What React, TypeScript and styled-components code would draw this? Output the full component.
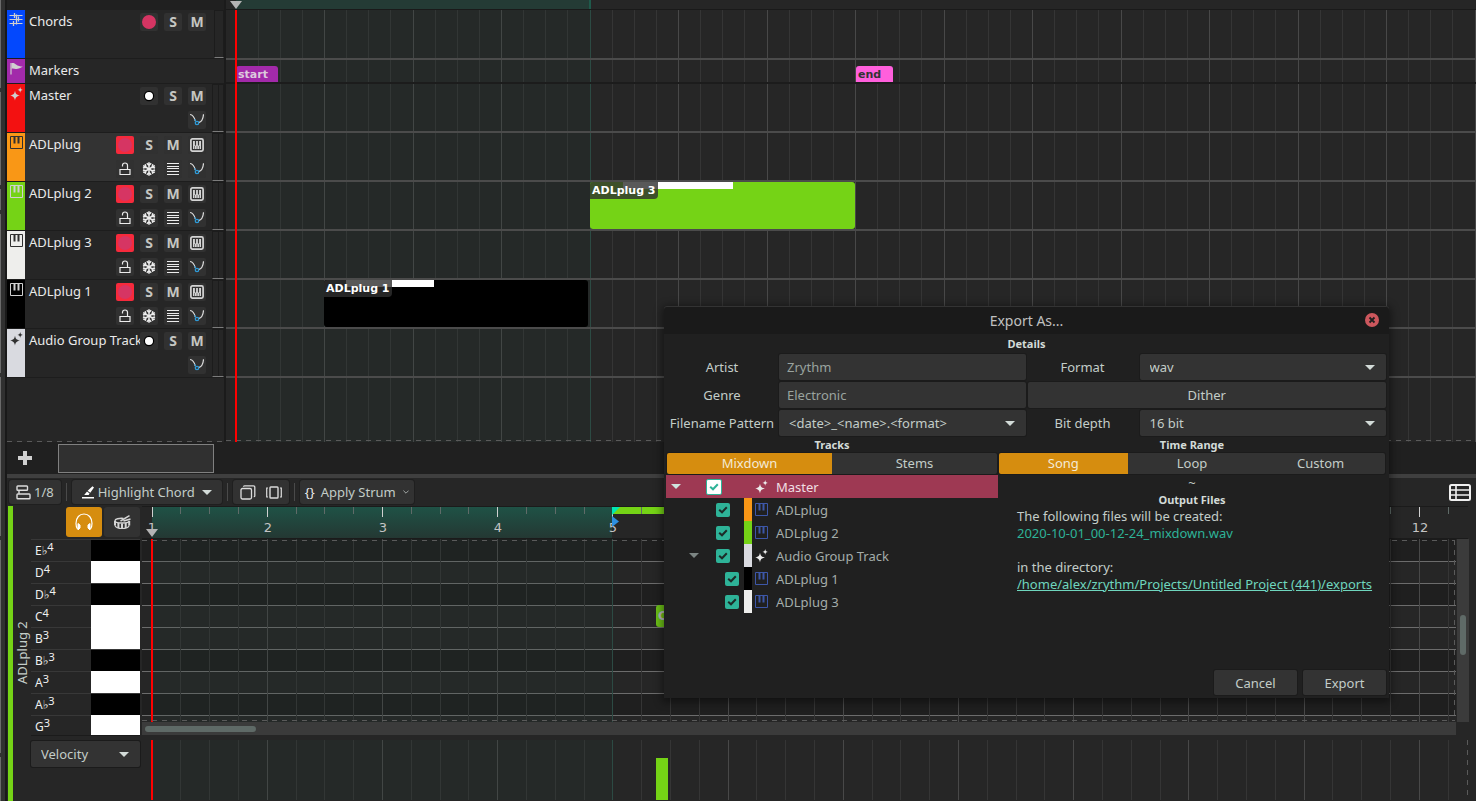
import React, { useEffect, useState } from 'react';
import styled, { createGlobalStyle, css } from 'styled-components';

const GlobalStyle = createGlobalStyle`
  * { box-sizing: border-box; }
  body {
    margin: 0;
    background: #262626;
    color: #e6e6e6;
    font-family: "Noto Sans", "DejaVu Sans", sans-serif;
    font-size: 13px;
    overflow: hidden;
  }
  button, select, input { font: inherit; color: inherit; margin: 0; }
  button { padding: 0; border: 0; cursor: pointer; }
`;

/* ---------- icons ---------- */

const PianoIcon = ({ color, size = 13 }: { color: string; size?: number }) => (
  <svg width={size} height={size} viewBox="0 0 13 13" fill="none" stroke={color} aria-hidden>
    <path d="M.5.5h12v12H.5z" />
    <path d="M4.500 1v6.500M8.500 1v6.500" strokeWidth="2" />
  </svg>
);

const SparkIcon = ({ color }: { color: string }) => (
  <svg width="13" height="14" viewBox="0 0 13 14" fill={color} aria-hidden>
    <path d="M5 3.800c.7 3.100 1.300 3.900 4.900 4.800C6.300 9.500 5.700 10.400 5 13.500 4.300 10.400 3.700 9.500.1 8.600 3.700 7.700 4.300 6.900 5 3.800z" />
    <path d="M10.200 0c.4 1.900.8 2.400 2.700 2.900-1.900.4-2.300.9-2.700 2.800-.4-1.900-.8-2.400-2.700-2.800 1.900-.5 2.300-1 2.700-2.900z" />
  </svg>
);

const FlagIcon = ({ color }: { color: string }) => (
  <svg width="13" height="13" viewBox="0 0 13 13" aria-hidden>
    <path d="M1 1v11.500" stroke={color} strokeWidth="1.200" />
    <path d="M1.500 1.200c2-.6 3.300.2 4.500 1.300 2 1.600 4 1.900 6.800 2.100-2.400 1.500-4.600 2.700-7 2.500-1.600-.1-2.800-.8-4.300-.3z" fill={color} />
  </svg>
);

const ChordsIcon = ({ color }: { color: string }) => (
  <svg width="14" height="13" viewBox="0 0 14 13" stroke={color} fill="none" aria-hidden>
    <path d="M.5 2.500h13M.5 6.500h13M.5 10.500h13" />
    <path d="M5.500 0v5M7.500 1.500v10M9.500 3.500v5M4.500 8v5" strokeWidth="1.300" />
  </svg>
);

const PluginIcon = () => (
  <svg width="14" height="14" viewBox="0 0 14 14" fill="none" aria-hidden>
    <rect x=".9" y=".9" width="12.200" height="12.200" rx="1.500" stroke="#d4d4d4" strokeWidth="1.700" />
    <path d="M3 3h8v8H3z" fill="#d4d4d4" />
    <path d="M5.500 3v4.500M8.500 3v4.500" stroke="#333" strokeWidth="1.200" />
    <path d="M4.500 8v3M7 8v3M9.500 8v3" stroke="#555" strokeWidth=".7" />
  </svg>
);

const LockIcon = () => (
  <svg width="12" height="14" viewBox="0 0 12 14" fill="none" stroke="#ececec" aria-hidden>
    <path d="M1 7.500h10v5H1z" strokeWidth="1.200" />
    <path d="M3.500 4.500V3.300c0-1.400 1.100-2.300 2.500-2.300s2.500.9 2.500 2.300v4" strokeWidth="1.200" />
  </svg>
);

const FreezeIcon = () => (
  <svg width="14" height="14" viewBox="0 0 14 14" fill="none" stroke="#ececec" strokeWidth="1.500" aria-hidden>
    {[0, 60, 120, 180, 240, 300].map((a) => (
      <path key={a} d="M7 7V.2M4.800 1.300l2.200 2.200 2.200-2.200" transform={`rotate(${a} 7 7)`} />
    ))}
  </svg>
);

const LinesIcon = () => (
  <svg width="12" height="12" viewBox="0 0 12 12" stroke="#ececec" aria-hidden>
    <path d="M0 .5h12M0 3.500h12M0 5.500h12M0 8.500h12M0 11.500h12" />
  </svg>
);

const CurveIcon = () => (
  <svg width="14" height="14" viewBox="0 0 14 14" fill="none" aria-hidden>
    <path d="M0 1.500c3 .3 4.200 2.300 5.300 6.500M13.500 1.300c-.3 5-2.200 7.600-5 8.300" stroke="#dcdcdc" strokeWidth="1.200" />
    <circle cx="7" cy="10" r="1.700" stroke="#2f9bd8" strokeWidth="1.300" />
    <path d="M4.500 6l1.500 2.500" stroke="#2f9bd8" />
  </svg>
);

const RecordIcon = () => (
  <svg width="14" height="14" viewBox="0 0 14 14" aria-hidden>
    <circle cx="7" cy="7" r="7" fill="#d63563" />
  </svg>
);

const MonitorIcon = () => (
  <svg width="14" height="14" viewBox="0 0 14 14" aria-hidden>
    <circle cx="7" cy="7" r="4.600" fill="#fff" stroke="#000" strokeWidth="1.200" />
  </svg>
);

const CaretIcon = ({ color = '#d3dbd8' }: { color?: string }) => (
  <svg width="10" height="5" viewBox="0 0 10 5" aria-hidden>
    <path d="M0 0h10L5 5z" fill={color} />
  </svg>
);

const ChevronIcon = () => (
  <svg width="6" height="4" viewBox="0 0 6 4" fill="none" stroke="#a0a6a4" aria-hidden>
    <path d="M.4.6 3 3.200 5.600.6" />
  </svg>
);

const SnapIcon = () => (
  <svg width="15" height="15" viewBox="0 0 15 15" fill="none" stroke="#dcdcdc" strokeWidth="1.400" aria-hidden>
    <rect x="1" y="1" width="10.500" height="4.200" rx=".8" />
    <rect x="1" y="9" width="13" height="4.800" rx=".8" />
    <path d="M3 5.500v3.300" />
  </svg>
);

const HighlightIcon = () => (
  <svg width="13" height="13" viewBox="0 0 13 13" fill="#fff" aria-hidden>
    <path d="M0 11h12v1.500H0z" />
    <path d="M10.500.2 12 1.500 8.300 6.800 5.600 4.800zM5 5.500l2.600 2-1 1.500H2.200l1-1.300z" />
  </svg>
);

const CopyIcon = () => (
  <svg width="16" height="15" viewBox="0 0 16 15" fill="none" stroke="#dcdcdc" strokeWidth="1.300" aria-hidden>
    <rect x="1" y="3.500" width="10.500" height="10.500" rx="1.500" />
    <path d="M3.500 1.800c0-.6.400-.9 1-.9h9c.8 0 1.300.5 1.300 1.300v8.500c0 .7-.4 1-1 1" />
  </svg>
);

const FlipIcon = () => (
  <svg width="16" height="13" viewBox="0 0 16 13" fill="none" stroke="#dcdcdc" strokeWidth="1.400" aria-hidden>
    <rect x="4" y="1" width="8" height="11" rx=".8" />
    <path d="M2 2H.7v9H2M14 2h1.300v9H14" strokeWidth="1.200" />
  </svg>
);

const TableIcon = () => (
  <svg width="22" height="17" viewBox="0 0 22 17" fill="none" stroke="#f0f0f0" aria-hidden>
    <rect x="1" y="1" width="20" height="15" rx="1.500" strokeWidth="2" />
    <path d="M1 6h20M1 11h20M7 1v15" strokeWidth="1.600" />
  </svg>
);

const HeadphonesIcon = () => (
  <svg width="18" height="18" viewBox="0 0 18 18" fill="none" stroke="#fff" aria-hidden>
    <path d="M2.500 16c-1-1.500-1.500-3.500-1.500-5.500C1 4.500 4.500 1 9 1s8 3.500 8 9.500c0 2-.5 4-1.500 5.500" strokeWidth="1.200" />
    <path d="M3 10.500l2 1.500v3L3 17zM15 10.500L13 12v3l2 2z" fill="#fff" strokeWidth="1" />
  </svg>
);

const DrumIcon = () => (
  <svg width="17" height="15" viewBox="0 0 17 15" fill="none" stroke="#d4d4d4" aria-hidden>
    <path d="M9.500 3.400C5 3 1 4 1 5.700 1 7.200 4 8 8 8s7.200-.8 7.200-2.300" strokeWidth="1.400" />
    <path d="M1 6v4.500M4.400 8v5M8 8.500v5.200M11.700 8v5M15.200 6v4.500" strokeWidth="2" />
    <path d="M1 10.500c.8 2 3.500 3 7 3s6.500-1 7.200-3" strokeWidth="1.200" />
    <path d="M6.500 6 15.500.7M9.500 6l7-2" strokeWidth="1.500" />
  </svg>
);

const PlusIcon = () => (
  <svg width="14" height="14" viewBox="0 0 14 14" fill="#d0d0d0" aria-hidden>
    <path d="M5 0h4v5h5v4H9v5H5V9H0V5h5z" />
  </svg>
);

const PlayheadIcon = () => (
  <svg width="12" height="8" viewBox="0 0 12 8" aria-hidden>
    <path d="M0 0h12L6 8z" fill="#b4b4b4" />
  </svg>
);

/* ---------- page frame ---------- */

const dashes = (direction: string) =>
  `repeating-linear-gradient(${direction}, #5a5a5a 0 5px, transparent 5px 10px)`;

const Page = styled.div`
  display: flex;
  min-height: 100vh;
`;

const Rail = styled.div`
  width: 7px;
  flex: none;
  background: #303030;
  border-right: 2px solid #191919;
  display: flex;
  flex-direction: column;
  gap: 4px;
`;

const RailSegment = styled.div<{ $grow: number }>`
  flex: ${(p) => p.$grow};
  width: 1px;
  background: #6a6a6a;
`;

const Main = styled.main`
  flex: 1;
  min-width: 0;
  display: flex;
  flex-direction: column;
`;

const Timeline = styled.section`
  display: flex;
`;

/* ---------- track list ---------- */

const TrackList = styled.div`
  width: 219px;
  flex: none;
  display: flex;
  flex-direction: column;
  border-right: 2px solid #1b1b1b;
  background: ${dashes('to right')} bottom / 100% 1px no-repeat;
`;

const TrackListHead = styled.div`
  height: 10px;
  background: #202020;
`;

const Track = styled.div<{ $selected?: boolean; $short?: boolean }>`
  display: flex;
  height: ${(p) => (p.$short ? 25 : 49)}px;
  border-bottom: 1px solid #1d1d1d;
  background: ${(p) => (p.$selected ? 'linear-gradient(to right, #333 205px, #262626 205px)' : '#262626')};
`;

const TrackColor = styled.div<{ $color: string }>`
  width: 18px;
  flex: none;
  display: flex;
  justify-content: center;
  align-items: flex-start;
  padding-top: 3px;
  background: ${(p) => p.$color};
`;

const TrackName = styled.div`
  flex: 1;
  min-width: 0;
  padding: 2px 0 0 4px;
  line-height: 18px;
  white-space: nowrap;
  color: #eaeaea;
`;

const TrackButtons = styled.div`
  display: flex;
  flex-direction: column;
  gap: 6px;
  padding-top: 3px;
`;

const ButtonRow = styled.div`
  display: flex;
  justify-content: flex-end;
  gap: 6px;
`;

const TrackButton = styled.button<{ $armed?: boolean }>`
  width: 18px;
  height: 18px;
  display: flex;
  align-items: center;
  justify-content: center;
  border-radius: 2px;
  background: ${(p) => (p.$armed ? '#f62a3c' : '#313131')};
  color: #c6c6c2;
  font-weight: 700;
  font-size: 14px;
  line-height: 18px;
`;

const Meter = styled.div<{ $narrow?: boolean }>`
  width: ${(p) => (p.$narrow ? 10 : 12)}px;
  margin-left: ${(p) => (p.$narrow ? 8 : 6)}px;
  border: 1px solid #1c1c1c;
  border-bottom-color: #7c7c7c;
  display: flex;
  justify-content: center;
  &::before {
    content: '';
    width: 1px;
    background: ${(p) => (p.$narrow ? 'transparent' : '#1c1c1c')};
  }
`;

type TrackKind = 'chord' | 'marker' | 'bus' | 'instrument';
interface TrackInfo { name: string; color: string; kind: TrackKind; ink: string; selected?: boolean }

const tracks: TrackInfo[] = [
  { name: 'Chords', color: '#0348fd', kind: 'chord', ink: '#d0d0d0' },
  { name: 'Markers', color: '#a22aaa', kind: 'marker', ink: '#d0d0d0' },
  { name: 'Master', color: '#f31111', kind: 'bus', ink: '#d0d0d0' },
  { name: 'ADLplug', color: '#f99716', kind: 'instrument', ink: '#303030', selected: true },
  { name: 'ADLplug 2', color: '#75d316', kind: 'instrument', ink: '#d0d0d0' },
  { name: 'ADLplug 3', color: '#eeeeec', kind: 'instrument', ink: '#303030' },
  { name: 'ADLplug 1', color: '#000000', kind: 'instrument', ink: '#d0d0d0' },
  { name: 'Audio Group Track', color: '#d9dae0', kind: 'bus', ink: '#303030' },
];

const TrackGlyph = ({ kind, ink }: { kind: TrackKind; ink: string }) => {
  if (kind === 'chord') return <ChordsIcon color={ink} />;
  if (kind === 'marker') return <FlagIcon color={ink} />;
  if (kind === 'bus') return <SparkIcon color={ink} />;
  return <PianoIcon color={ink} />;
};

const TrackRow = ({ track }: { track: TrackInfo }) => {
  const { kind } = track;
  return (
    <Track $selected={track.selected} $short={kind === 'marker'}>
      <TrackColor $color={track.color}><TrackGlyph kind={kind} ink={track.ink} /></TrackColor>
      <TrackName>{track.name}</TrackName>
      {kind !== 'marker' && (
        <>
          <TrackButtons>
            <ButtonRow>
              <TrackButton $armed={kind === 'instrument'} aria-label="Record">
                {kind === 'bus' ? <MonitorIcon /> : <RecordIcon />}
              </TrackButton>
              <TrackButton>S</TrackButton>
              <TrackButton>M</TrackButton>
              {kind === 'instrument' && <TrackButton aria-label="Plugin"><PluginIcon /></TrackButton>}
            </ButtonRow>
            {kind !== 'chord' && (
              <ButtonRow>
                {kind === 'instrument' && (
                  <>
                    <TrackButton aria-label="Lock"><LockIcon /></TrackButton>
                    <TrackButton aria-label="Freeze"><FreezeIcon /></TrackButton>
                    <TrackButton aria-label="Lanes"><LinesIcon /></TrackButton>
                  </>
                )}
                <TrackButton aria-label="Automation"><CurveIcon /></TrackButton>
              </ButtonRow>
            )}
          </TrackButtons>
          <Meter $narrow={kind === 'chord'} />
        </>
      )}
    </Track>
  );
};

/* ---------- arrangers ---------- */

const Canvas = styled.div`
  position: relative;
  flex: 1;
  min-width: 0;
  overflow: hidden;
`;

const GridLine = styled.i<{ $strong: boolean }>`
  position: absolute;
  top: 0;
  bottom: 0;
  width: 1px;
  background: ${(p) => (p.$strong ? '#484848' : '#353535')};
`;

const LoopTint = styled.div<{ $width: number }>`
  position: absolute;
  top: 0;
  bottom: 0;
  left: 10px;
  width: ${(p) => p.$width}px;
  background: rgba(34, 66, 58, 0.14);
  border-right: 1px solid #2c4a43;
`;

const Playhead = styled.div`
  position: absolute;
  top: 0;
  bottom: 0;
  left: 9px;
  width: 2px;
  background: #ff0000;
`;

const useWindowWidth = () => {
  const [width, setWidth] = useState(window.innerWidth);
  useEffect(() => {
    const update = () => setWidth(window.innerWidth);
    window.addEventListener('resize', update);
    return () => window.removeEventListener('resize', update);
  }, []);
  return width;
};

const range = (count: number) => Array.from({ length: Math.max(0, count) }, (_, i) => i);

const GridLines = ({ step }: { step: number }) => {
  const width = useWindowWidth();
  return (
    <>
      {range(Math.ceil(width / step)).map((i) => (
        <GridLine key={i} $strong={i % 4 === 0} style={{ left: Math.floor(10 + i * step) }} />
      ))}
    </>
  );
};

const TimelineBody = styled.div`
  flex: 1;
  min-width: 0;
  display: flex;
  flex-direction: column;
`;

const TimelineRuler = styled.div`
  position: relative;
  height: 10px;
  border-bottom: 1px solid #1a1a1a;
`;

const RulerLoop = styled.div`
  position: absolute;
  inset: 0 auto 0 10px;
  width: 355px;
  background: #243b35;
  border-right: 2px solid #1f5a4b;
`;

const RulerHead = styled.div`
  position: absolute;
  top: 1px;
  left: 4px;
  line-height: 0;
`;

const Lane = styled.div<{ $height: number; $last?: boolean; $dark?: boolean }>`
  position: relative;
  height: ${(p) => p.$height}px;
  border-bottom: 2px ${(p) => (p.$last ? 'none' : 'solid')} ${(p) => (p.$dark ? '#1c1c1c' : '#4b4b4b')};
`;

const LaneStack = styled.div`
  position: relative;
  margin-bottom: 1px;
  background: ${dashes('to right')} bottom / 100% 1px no-repeat;
`;

const Marker = styled.div<{ $color: string; $ink: string; $left: number; $width: number }>`
  position: absolute;
  bottom: 0;
  left: ${(p) => p.$left}px;
  width: ${(p) => p.$width}px;
  height: 16px;
  padding-left: 2px;
  border-radius: 3px 3px 0 0;
  background: ${(p) => p.$color};
  color: ${(p) => p.$ink};
  font: bold 11px/17px "DejaVu Sans", sans-serif;
`;

const Region = styled.div<{ $color: string; $left: number; $width: number }>`
  position: absolute;
  top: 0;
  bottom: 0;
  left: ${(p) => p.$left}px;
  width: ${(p) => p.$width}px;
  border-radius: 3px;
  background: ${(p) => p.$color};
  overflow: hidden;
`;

const RegionNotes = styled.div<{ $left: number; $width: number }>`
  position: absolute;
  top: 0;
  left: ${(p) => p.$left}px;
  width: ${(p) => p.$width}px;
  height: 7px;
  background: #fff;
`;

const RegionName = styled.div`
  position: relative;
  width: max-content;
  height: 17px;
  padding: 0 2px;
  border-radius: 0 0 4px 0;
  background: rgba(48, 48, 48, 0.8);
  color: #fff;
  font: bold 11px/17px "DejaVu Sans", sans-serif;
`;

const TimelineFoot = styled.div`
  height: 32px;
  padding: 0 11px;
  display: flex;
  align-items: center;
  gap: 26px;
  background: #202020;
`;

const AddButton = styled.button`
  width: 14px;
  height: 28px;
  background: none;
  line-height: 0;
`;

const MiniMap = styled.div`
  width: 156px;
  height: 29px;
  border: 1px solid #808080;
  background: #303030;
`;

/* ---------- editor ---------- */

const Editor = styled.section`
  flex: 1;
  display: flex;
  flex-direction: column;
  border-top: 4px solid #3f3f3f;
`;

const Toolbar = styled.div`
  height: 28px;
  flex: none;
  padding: 2px 5px 2px 2px;
  display: flex;
  align-items: stretch;
  gap: 5px;
`;

const ToolGroup = styled.div<{ $pad: number }>`
  display: flex;
  align-items: center;
  padding: 0 ${(p) => p.$pad}px;
  gap: 10px;
  border-radius: 3px;
  box-shadow: 0 0 0 1px #1f1f1f;
  background: #323232;
`;

const ToolButton = styled.button`
  display: flex;
  align-items: center;
  gap: 3px;
  background: none;
  white-space: nowrap;
  color: #c3cdc8;
`;

const Braces = styled.span`
  padding-right: 3px;
  color: #ececec;
`;

const Caret = styled.span`
  margin-left: 4px;
  display: inline-flex;
`;

const Separator = styled.div`
  width: 1px;
  margin: 3px 0;
  background: #4a4a4a;
`;

const Spacer = styled.div`
  flex: 1;
`;

const EditorBody = styled.div`
  flex: 1;
  display: flex;
  padding-left: 1px;
`;

const EditorColor = styled.div`
  width: 5px;
  background: #75d316;
`;

const EditorName = styled.div`
  width: 18px;
  padding-top: 2px;
  display: flex;
  align-items: center;
  justify-content: center;
  writing-mode: vertical-rl;
  transform: rotate(180deg);
  line-height: 18px;
  color: #c3cdc8;
`;

const EditorGrid = styled.div`
  flex: 1;
  min-width: 0;
  display: grid;
  grid-template-columns: 109px minmax(0, 1fr);
  grid-template-rows: 33px 196px minmax(60px, 1fr);
  column-gap: 2px;
`;

const ModeButtons = styled.div`
  display: flex;
  justify-content: flex-end;
  gap: 2px;
  padding: 1px 0 2px;
`;

const ModeButton = styled.button<{ $active?: boolean }>`
  width: 36px;
  display: flex;
  align-items: center;
  justify-content: center;
  border-radius: 3px;
  background: ${(p) => (p.$active ? '#d68d0f' : '#323232')};
`;

const EditorRuler = styled.div`
  position: relative;
  margin-right: 8px;
  overflow: hidden;
  border: solid #1b1b1b;
  border-width: 1px 0 1px;
  font: 13px/16px "DejaVu Sans", sans-serif;
  color: #c4c4c4;
`;

const EditorLoop = styled.div`
  position: absolute;
  inset: 0 auto 0 10px;
  width: 460px;
  background: linear-gradient(#1f5246, #243833);
`;

const EditorRegion = styled.div`
  position: absolute;
  top: 0;
  left: 470px;
  width: 345px;
  height: 7px;
  background: #75d316;
`;

const LoopFlags = styled.div`
  position: absolute;
  top: 0;
  left: 470px;
  line-height: 0;
`;

const Tick = styled.i<{ $strong: boolean }>`
  position: absolute;
  top: 0;
  width: 1px;
  height: ${(p) => (p.$strong ? 10 : 7)}px;
  background: ${(p) => (p.$strong ? '#d0d0d0' : '#5f6b68')};
`;

const TickLabel = styled.span`
  position: absolute;
  top: 13px;
  width: 30px;
  margin-left: -15px;
  text-align: center;
`;

const EditorHead = styled.div`
  position: absolute;
  top: 22px;
  left: 4px;
  line-height: 0;
`;

const Keys = styled.div`
  overflow: hidden;
`;

const KeyRow = styled.div`
  display: flex;
  height: 22px;
  border-top: 1px solid #383838;
  padding-left: 4px;
  justify-content: space-between;
  font-size: 12px;
  line-height: 21px;
  color: #f0f0f0;
`;

const KeyFace = styled.div<{ $black: boolean }>`
  width: 49px;
  background: ${(p) => (p.$black ? '#000' : '#fff')};
  margin-top: ${(p) => (p.$black ? 0 : -1)}px;
`;

const Octave = styled.span`
  font-size: 11px;
  position: relative;
  top: -4px;
`;

const RollArea = styled.div`
  display: grid;
  grid-template-columns: minmax(0, 1fr) 12px;
  grid-template-rows: 183px 13px;
  column-gap: 1px;
  margin-right: 7px;
`;

const Roll = styled(Canvas)`
  &::after {
    content: '';
    position: absolute;
    inset: 1px 1px 1px 0;
    pointer-events: none;
    background:
      ${dashes('to right')} top / 100% 1px no-repeat,
      ${dashes('to right')} bottom / 100% 1px no-repeat,
      ${dashes('to bottom')} right / 1px 100% no-repeat;
  }
`;

const RollRow = styled.div<{ $black: boolean }>`
  height: 22px;
  border-top: 1px solid #6c6c6c;
  background: ${(p) => (p.$black ? '#1f1f1f' : '#262626')};
  &:first-child { border-top-color: #1b1b1b; }
`;

const Note = styled.div`
  position: absolute;
  top: 66px;
  left: 514px;
  width: 29px;
  height: 22px;
  padding-left: 2px;
  border-radius: 3px;
  background: #6cc017;
  color: #b9b9b9;
  font: bold 12px/22px "DejaVu Sans", sans-serif;
`;

const ScrollTrack = styled.div<{ $vertical?: boolean }>`
  background: #3b3b3b;
  padding: ${(p) => (p.$vertical ? '76px 3px 0' : '4px 3px 0')};
`;

const ScrollThumb = styled.div<{ $vertical?: boolean }>`
  border-radius: 3px;
  background: #5f6a67;
  ${(p) => (p.$vertical ? css`height: 40px;` : css`width: 111px; height: 6px;`)}
`;

const VelocityHead = styled.div`
  padding-top: 5px;
  border-top: 1px solid #1b1b1b;
`;

const SelectBox = styled.div`
  position: relative;
  display: flex;
  height: 26px;
`;

const control = css`
  border: 0;
  border-radius: 2px;
  box-shadow: 0 0 0 1px #1b1b1b;
  background: #333;
`;

const Select = styled.select`
  ${control}
  appearance: none;
  width: 100%;
  padding: 0 28px 0 10px;
  color: #c3cdc8;
`;

const SelectCaret = styled.span`
  position: absolute;
  right: 11px;
  top: 11px;
  line-height: 0;
  pointer-events: none;
`;

const DropDown = ({ label, options, id }: { label: string; options: string[]; id: string }) => (
  <SelectBox>
    <Select id={id} aria-label={label}>
      {options.map((o) => <option key={o}>{o}</option>)}
    </Select>
    <SelectCaret><CaretIcon /></SelectCaret>
  </SelectBox>
);

const VelocityCanvas = styled(Canvas)`
  margin: 5px 8px 1px 0;
  &::after {
    content: '';
    position: absolute;
    inset: 0 0 0 auto;
    width: 1px;
    background: ${dashes('to bottom')};
  }
`;

const VelocityBar = styled.div`
  position: absolute;
  left: 514px;
  bottom: 0;
  width: 12px;
  height: 42px;
  background: #75d316;
`;

const keys: { note: string; octave: number; black: boolean }[] = [
  { note: 'E♭', octave: 4, black: true },
  { note: 'D', octave: 4, black: false },
  { note: 'D♭', octave: 4, black: true },
  { note: 'C', octave: 4, black: false },
  { note: 'B', octave: 3, black: false },
  { note: 'B♭', octave: 3, black: true },
  { note: 'A', octave: 3, black: false },
  { note: 'A♭', octave: 3, black: true },
  { note: 'G', octave: 3, black: false },
];

/* ---------- export dialog ---------- */

const Dialog = styled.div`
  position: absolute;
  top: 306px;
  right: 87px;
  width: 725px;
  height: 392px;
  display: flex;
  flex-direction: column;
  background: #202020;
  border-radius: 3px 3px 0 0;
  box-shadow: 0 2px 8px 2px rgba(0, 0, 0, 0.45);
  color: #c3cdc8;
`;

const TitleBar = styled.header`
  position: relative;
  height: 28px;
  margin-bottom: 1px;
  display: flex;
  align-items: center;
  justify-content: center;
  background: #1a1a1a;
  box-shadow: inset 0 1px #333;
  border-radius: 3px 3px 0 0;
  font-size: 14px;
  color: #c0c0c0;
`;

const CloseButton = styled.button`
  position: absolute;
  right: 10px;
  top: 7px;
  width: 14px;
  height: 14px;
  border-radius: 50%;
  background: #cc575d;
  line-height: 0;
`;

const Heading = styled.h2`
  margin: 0;
  font-size: 11px;
  line-height: 17px;
  font-weight: 700;
  text-align: center;
  color: #d3dbd8;
`;

const Form = styled.form`
  display: grid;
  grid-template-columns: 110px minmax(0, 1fr) 110px minmax(0, 1fr);
  gap: 2px;
  padding: 2px 3px 0;
`;

const FieldLabel = styled.label`
  display: flex;
  align-items: center;
  justify-content: center;
  white-space: nowrap;
`;

const TextField = styled.input`
  ${control}
  height: 26px;
  width: 100%;
  padding: 0 8px;
  color: #9aa39f;
`;

const WideToggle = styled.button`
  ${control}
  grid-column: span 2;
  color: #c3cdc8;
`;

const Columns = styled.div`
  flex: 1;
  display: grid;
  grid-template-columns: 332px minmax(0, 1fr);
  padding: 0 3px 0 2px;
`;

const Column = styled.section`
  display: flex;
  flex-direction: column;
`;

const Tabs = styled.div`
  display: flex;
  margin: 0 1px 1px;
  border-radius: 2px;
  box-shadow: 0 0 0 1px #1b1b1b;
  overflow: hidden;
`;

const Tab = styled.button<{ $active?: boolean }>`
  flex: 1;
  height: 21px;
  line-height: 21px;
  background: ${(p) => (p.$active ? '#d68d0f' : '#333')};
  color: ${(p) => (p.$active ? '#f4ead6' : '#c3cdc8')};
`;

const Tree = styled.ul`
  margin: 0;
  padding: 0;
  list-style: none;
`;

const TreeRow = styled.li<{ $selected?: boolean }>`
  display: flex;
  height: 23px;
  align-items: center;
  background: ${(p) => (p.$selected ? '#9e3953' : 'transparent')};
  color: ${(p) => (p.$selected ? '#f0dfe3' : '#a4adaa')};
`;

const leadPadding = ['0 22px 0 5px', '0 14px 0 23px', '0 5px 0 32px'];

const TreeLead = styled.div<{ $depth: number }>`
  width: 78px;
  padding: ${(p) => leadPadding[p.$depth]};
  display: flex;
  align-items: center;
  justify-content: space-between;
`;

const CheckWrap = styled.span`
  position: relative;
  display: flex;
  margin-left: auto;
  svg { position: absolute; inset: 0; margin: auto; pointer-events: none; }
`;

const Check = styled.input<{ $selected?: boolean }>`
  appearance: none;
  width: ${(p) => (p.$selected ? 16 : 14)}px;
  height: ${(p) => (p.$selected ? 16 : 14)}px;
  border-radius: 2px;
  border: ${(p) => (p.$selected ? '1px solid #2eb398' : '0')};
  background: ${(p) => (p.$selected ? '#fff' : '#2eb398')};
`;

const TreeColor = styled.span<{ $color: string }>`
  width: 8px;
  align-self: stretch;
  background: ${(p) => p.$color};
`;

const TreeIcon = styled.span`
  width: 24px;
  padding-left: 3px;
  line-height: 0;
`;

const RangeInfo = styled.div`
  line-height: 16px;
  text-align: center;
`;

const Output = styled.p`
  margin: 0;
  padding-left: 19px;
  line-height: 17px;
  color: #c3cdc8;
`;

const FileName = styled.span`
  color: #2eb398;
`;

const FolderLink = styled.a`
  color: #6fd6be;
  text-decoration: underline;
`;

const Actions = styled.footer`
  display: flex;
  justify-content: flex-end;
  gap: 6px;
  padding: 0 3px 3px;
`;

const ActionButton = styled.button`
  ${control}
  width: 83px;
  height: 25px;
  color: #c3cdc8;
`;

interface TreeItem { name: string; depth: number; color: string; bus?: boolean; open?: boolean; selected?: boolean }

const tree: TreeItem[] = [
  { name: 'Master', depth: 0, color: 'transparent', bus: true, open: true, selected: true },
  { name: 'ADLplug', depth: 1, color: '#f99716' },
  { name: 'ADLplug 2', depth: 1, color: '#75d316' },
  { name: 'Audio Group Track', depth: 1, color: '#d9dae0', bus: true, open: true },
  { name: 'ADLplug 1', depth: 2, color: '#000' },
  { name: 'ADLplug 3', depth: 2, color: '#eeeeec' },
];

const ExportDialog = () => (
  <Dialog role="dialog" aria-label="Export As...">
    <TitleBar>
      Export As...
      <CloseButton aria-label="Close">
        <svg width="14" height="14" viewBox="0 0 14 14" stroke="#1f1f1f" strokeWidth="1.800">
          <path d="M4.500 4.500l5 5M9.500 4.500l-5 5" />
        </svg>
      </CloseButton>
    </TitleBar>
    <Heading>Details</Heading>
    <Form onSubmit={(e) => e.preventDefault()}>
      <FieldLabel htmlFor="artist">Artist</FieldLabel>
      <TextField id="artist" defaultValue="Zrythm" />
      <FieldLabel htmlFor="format">Format</FieldLabel>
      <DropDown id="format" label="Format" options={['wav', 'flac', 'ogg']} />
      <FieldLabel htmlFor="genre">Genre</FieldLabel>
      <TextField id="genre" defaultValue="Electronic" />
      <WideToggle type="button">Dither</WideToggle>
      <FieldLabel htmlFor="pattern">Filename Pattern</FieldLabel>
      <DropDown id="pattern" label="Filename Pattern" options={['<date>_<name>.<format>']} />
      <FieldLabel htmlFor="depth">Bit depth</FieldLabel>
      <DropDown id="depth" label="Bit depth" options={['16 bit', '24 bit', '32 bit']} />
    </Form>
    <Columns>
      <Column>
        <Heading>Tracks</Heading>
        <Tabs>
          <Tab $active>Mixdown</Tab>
          <Tab>Stems</Tab>
        </Tabs>
        <Tree>
          {tree.map((item) => (
            <TreeRow key={item.name} $selected={item.selected}>
              <TreeLead $depth={item.depth}>
                {item.open && <CaretIcon color={item.selected ? '#cfe4df' : '#7c8583'} />}
                <CheckWrap>
                  <Check type="checkbox" defaultChecked $selected={item.selected} aria-label={item.name} />
                  <svg width="10" height="8" viewBox="0 0 10 8" fill="none" stroke={item.selected ? '#2eb398' : '#1d2b28'} strokeWidth="2">
                    <path d="M1.200 3.700 4 6.300 8.800 1.200" />
                  </svg>
                </CheckWrap>
              </TreeLead>
              <TreeColor $color={item.color} />
              <TreeIcon>{item.bus ? <SparkIcon color="#ececec" /> : <PianoIcon color="#3d57a8" />}</TreeIcon>
              {item.name}
            </TreeRow>
          ))}
        </Tree>
      </Column>
      <Column>
        <Heading>Time Range</Heading>
        <Tabs>
          <Tab $active>Song</Tab>
          <Tab>Loop</Tab>
          <Tab>Custom</Tab>
        </Tabs>
        <RangeInfo>~</RangeInfo>
        <Heading>Output Files</Heading>
        <Output>
          The following files will be created:<br />
          <FileName>2020-10-01_00-12-24_mixdown.wav</FileName><br />
          <br />
          in the directory:<br />
          <FolderLink href="#exports">/home/alex/zrythm/Projects/Untitled Project (441)/exports</FolderLink>
        </Output>
      </Column>
    </Columns>
    <Actions>
      <ActionButton>Cancel</ActionButton>
      <ActionButton>Export</ActionButton>
    </Actions>
  </Dialog>
);

/* ---------- page ---------- */

const TIMELINE_STEP = 22.125;
const EDITOR_STEP = 28.8;
const EDITOR_CHROME = 172;

const RulerMarks = () => {
  const steps = Math.floor((useWindowWidth() - EDITOR_CHROME) / EDITOR_STEP) + 1;
  return (
    <>
      {range(steps).map((i) => (
        <Tick key={i} $strong={i % 4 === 0} style={{ left: Math.floor(10 + i * EDITOR_STEP) }} />
      ))}
      {range(Math.ceil(steps / 4)).map((i) => (
        <TickLabel key={i} style={{ left: Math.ceil(10 + i * 4 * EDITOR_STEP) }}>{i + 1}</TickLabel>
      ))}
    </>
  );
};

export default function App() {
  return (
    <>
      <GlobalStyle />
      <Page>
        <Rail>
          <RailSegment $grow={80} />
          <RailSegment $grow={85} />
          <RailSegment $grow={20} />
          <RailSegment $grow={145} />
          <RailSegment $grow={145} />
          <RailSegment $grow={195} />
          <RailSegment $grow={40} />
        </Rail>
        <Main>
          <Timeline>
            <TrackList>
              <TrackListHead />
              {tracks.map((t) => <TrackRow key={t.name} track={t} />)}
            </TrackList>
            <TimelineBody>
              <TimelineRuler>
                <RulerLoop />
                <RulerHead><PlayheadIcon /></RulerHead>
              </TimelineRuler>
              <Canvas>
                <GridLines step={TIMELINE_STEP} />
                <LoopTint $width={355} />
                <LaneStack>
                  <Lane $height={50} />
                  <Lane $height={24} $dark>
                    <Marker $color="#a22aaa" $ink="#dcc9dd" $left={10} $width={42}>start</Marker>
                    <Marker $color="#ff5fdc" $ink="#333" $left={630} $width={37}>end</Marker>
                  </Lane>
                  <Lane $height={49} />
                  <Lane $height={49} />
                  <Lane $height={49}>
                    <Region $color="#75d316" $left={364} $width={265}>
                      <RegionNotes $left={33} $width={110} />
                      <RegionName>ADLplug 3</RegionName>
                    </Region>
                  </Lane>
                  <Lane $height={49} />
                  <Lane $height={49}>
                    <Region $color="#000" $left={98} $width={264}>
                      <RegionNotes $left={22} $width={88} />
                      <RegionName>ADLplug 1</RegionName>
                    </Region>
                  </Lane>
                  <Lane $height={49} />
                  <Lane $height={63} $last />
                </LaneStack>
                <Playhead />
              </Canvas>
            </TimelineBody>
          </Timeline>
          <TimelineFoot>
            <AddButton aria-label="Add track"><PlusIcon /></AddButton>
            <MiniMap />
          </TimelineFoot>

          <Editor>
            <Toolbar>
              <ToolGroup $pad={7}><ToolButton><SnapIcon />1/8</ToolButton></ToolGroup>
              <Separator />
              <ToolGroup $pad={10}>
                <ToolButton><HighlightIcon />Highlight Chord<Caret><CaretIcon /></Caret></ToolButton>
              </ToolGroup>
              <Separator />
              <ToolGroup $pad={7}>
                <ToolButton aria-label="Duplicate"><CopyIcon /></ToolButton>
                <ToolButton aria-label="Flip"><FlipIcon /></ToolButton>
              </ToolGroup>
              <Separator />
              <ToolGroup $pad={5}>
                <ToolButton><Braces>{'{}'}</Braces>Apply Strum<Caret><ChevronIcon /></Caret></ToolButton>
              </ToolGroup>
              <Spacer />
              <ToolButton aria-label="Event list"><TableIcon /></ToolButton>
            </Toolbar>
            <EditorBody>
              <EditorColor />
              <EditorName>ADLplug 2</EditorName>
              <EditorGrid>
                <ModeButtons>
                  <ModeButton $active aria-label="Listen"><HeadphonesIcon /></ModeButton>
                  <ModeButton aria-label="Drum mode"><DrumIcon /></ModeButton>
                </ModeButtons>
                <EditorRuler>
                  <EditorLoop />
                  <EditorRegion />
                  <RulerMarks />
                  <LoopFlags>
                    <svg width="8" height="22" viewBox="0 0 8 22">
                      <path d="M0 0h8L0 8z" fill="#00e6b4" />
                      <path d="M0 9l7 5.500L0 20z" fill="#2d8fe0" />
                    </svg>
                  </LoopFlags>
                  <EditorHead><PlayheadIcon /></EditorHead>
                </EditorRuler>

                <Keys>
                  {keys.map((k) => (
                    <KeyRow key={k.note + k.octave}>
                      <span>{k.note}<Octave>{k.octave}</Octave></span>
                      <KeyFace $black={k.black} />
                    </KeyRow>
                  ))}
                </Keys>
                <RollArea>
                  <Roll>
                    {keys.map((k) => <RollRow key={k.note + k.octave} $black={k.black} />)}
                    <GridLines step={EDITOR_STEP} />
                    <LoopTint $width={461} />
                    <Note>C</Note>
                    <Playhead />
                  </Roll>
                  <ScrollTrack $vertical><ScrollThumb $vertical /></ScrollTrack>
                  <ScrollTrack><ScrollThumb /></ScrollTrack>
                </RollArea>

                <VelocityHead>
                  <DropDown id="lane" label="Lane" options={['Velocity', 'Pitch Bend']} />
                </VelocityHead>
                <VelocityCanvas>
                  <GridLines step={EDITOR_STEP} />
                  <LoopTint $width={461} />
                  <VelocityBar />
                  <Playhead />
                </VelocityCanvas>
              </EditorGrid>
            </EditorBody>
          </Editor>
        </Main>
      </Page>
      <ExportDialog />
    </>
  );
}
